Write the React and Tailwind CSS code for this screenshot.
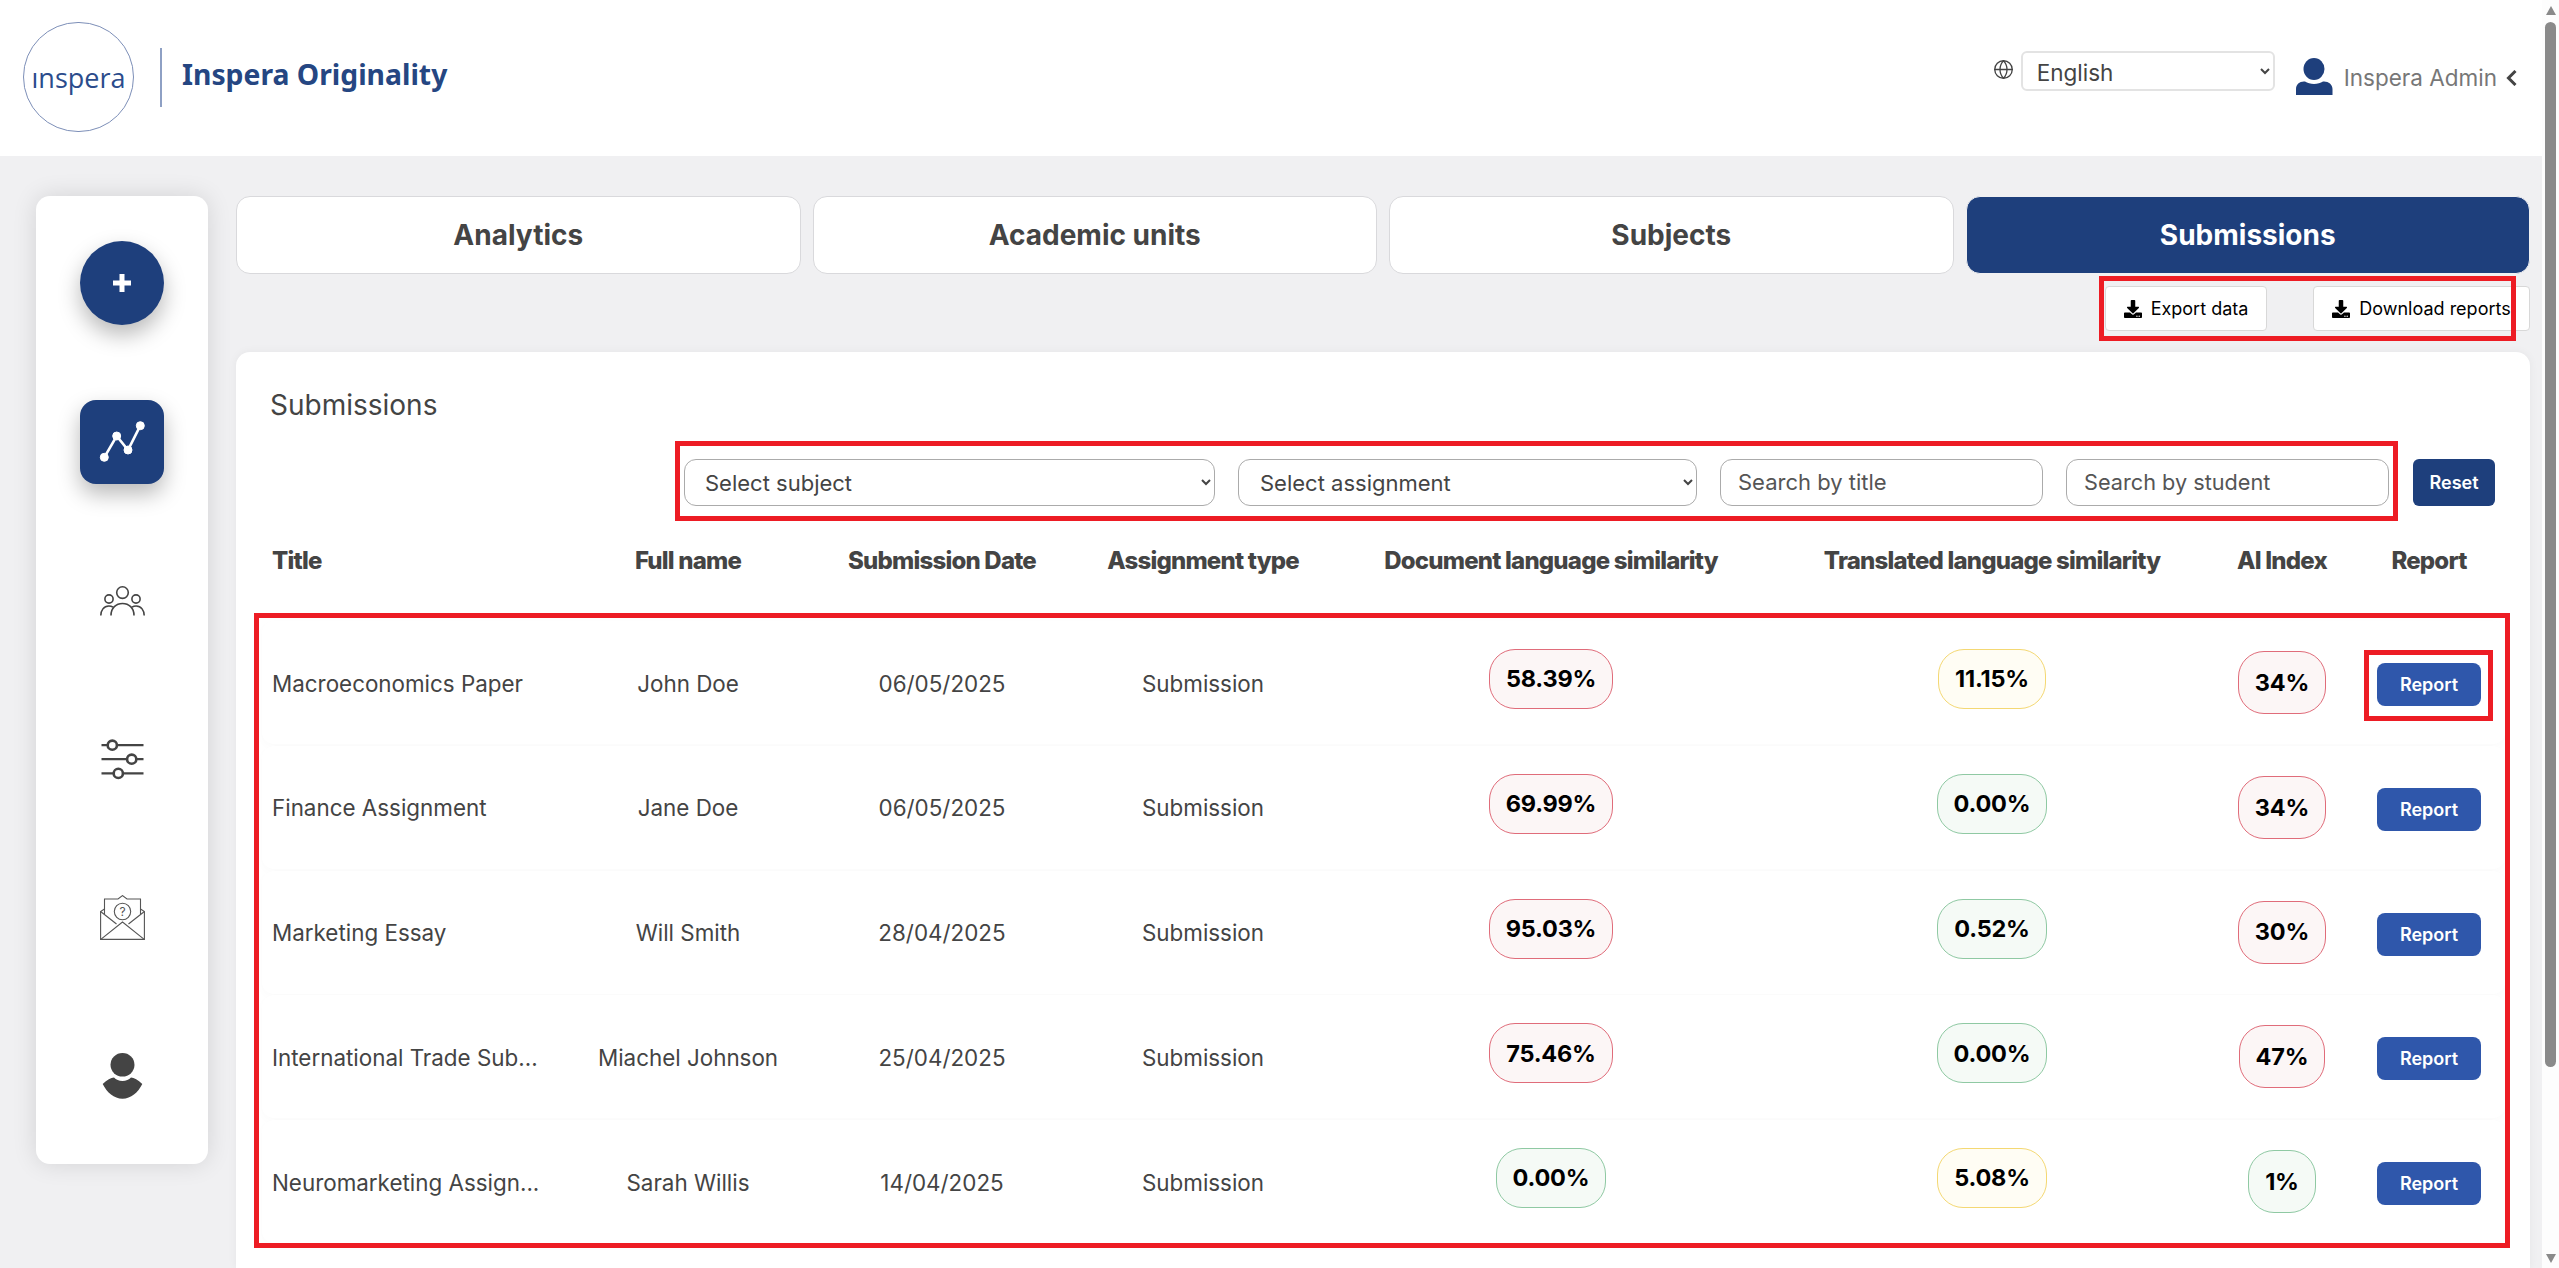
import React from "react";
import { Globe } from "lucide-react";
import { FaDownload } from "react-icons/fa";

const rows = [
  { title: "Macroeconomics Paper", name: "John Doe", date: "06/05/2025", doc: ["58.39%", "r"], tr: ["11.15%", "y"], ai: ["34%", "r"] },
  { title: "Finance Assignment", name: "Jane Doe", date: "06/05/2025", doc: ["69.99%", "r"], tr: ["0.00%", "g"], ai: ["34%", "r"] },
  { title: "Marketing Essay", name: "Will Smith", date: "28/04/2025", doc: ["95.03%", "r"], tr: ["0.52%", "g"], ai: ["30%", "r"] },
  { title: "International Trade Sub...", name: "Miachel Johnson", date: "25/04/2025", doc: ["75.46%", "r"], tr: ["0.00%", "g"], ai: ["47%", "r"] },
  { title: "Neuromarketing Assign...", name: "Sarah Willis", date: "14/04/2025", doc: ["0.00%", "g"], tr: ["5.08%", "y"], ai: ["1%", "g"] },
];

const tone = {
  r: "bg-[#fcf6f6] border-[#e06c7a]",
  y: "bg-[#fffdf4] border-[#f4d873]",
  g: "bg-[#f5faf6] border-[#8fc9a3]",
};

const cols = "grid grid-cols-[301px_250px_258px_264px_432px_450px_130px_158px] items-center";

function Pill({ value, t, tall }) {
  return (
    <span
      className={
        "inline-flex items-center justify-center border px-[16px] rounded-[26px] text-[23.5px] font-bold tracking-[-0.2px] text-black " +
        tone[t] +
        (tall ? " h-[63px]" : " h-[60px] mb-[7px]")
      }
    >
      {value}
    </span>
  );
}

function PeopleIcon() {
  return (
    <svg width="45" height="30" viewBox="0 0 45 30" fill="none" stroke="#444" strokeWidth="1.6">
      <circle cx="22.5" cy="6.6" r="5.8" />
      <circle cx="9" cy="13" r="4.1" />
      <circle cx="36" cy="13" r="4.1" />
      <path d="M11 29.5C11 22 16 17.5 22.5 17.5C29 17.5 34 22 34 29.5" />
      <path d="M0.8 29.5c0-5 3-9.5 8-9.5 1.5 0 3 .4 4.2 1.2" />
      <path d="M44.2 29.5c0-5-3-9.5-8-9.5-1.5 0-3 .4-4.2 1.2" />
    </svg>
  );
}

function SlidersIcon() {
  return (
    <svg width="43" height="41" viewBox="0 0 43 41" fill="none" stroke="#444">
      <path d="M0.5 6.2H42.5M0.5 20.2H42.5M0.5 34.4H42.5" strokeWidth="2.2" />
      <circle cx="11.3" cy="6.2" r="4.6" fill="#fff" strokeWidth="2.6" />
      <circle cx="30.7" cy="20.2" r="4.6" fill="#fff" strokeWidth="2.6" />
      <circle cx="17.3" cy="34.4" r="4.6" fill="#fff" strokeWidth="2.6" />
    </svg>
  );
}

function EnvelopeIcon() {
  return (
    <svg width="45" height="45" viewBox="0 0 45 45" fill="none" stroke="#555" strokeWidth="1.1">
      <path d="M4.5 14L0.6 16.5V44.4H44.4V16.5L40.5 14" />
      <path d="M4.5 19V4H18L22.5 0.6L27 4H40.5V19" />
      <path d="M0.6 16.5L16.5 29M44.4 16.5L28.5 29M0.8 44.4L22.5 27L44.2 44.4" />
      <circle cx="22.5" cy="16.5" r="8.2" />
      <text x="22.5" y="20.8" textAnchor="middle" fontSize="12" fill="#555" stroke="none" fontFamily="Inter, sans-serif">?</text>
    </svg>
  );
}

function UserGrey() {
  return (
    <svg width="41" height="46" viewBox="0 0 41 46" fill="#444">
      <ellipse cx="20.5" cy="11.8" rx="12" ry="11.8" />
      <path d="M0.7 31C5 27 9 24.8 12 24.6C14 26.8 17 28 20.5 28C24 28 27 26.8 29 24.6C32 24.8 36 27 40.3 31C36 39.5 29 45.7 20.5 45.7C12 45.7 5 39.5 0.7 31Z" />
    </svg>
  );
}

function UserBlue() {
  return (
    <svg width="37" height="37" viewBox="0 0 37 37" fill="#1e3f7c">
      <ellipse cx="18" cy="11" rx="10.5" ry="11" />
      <path d="M0 37V31C0 26 4 23 9 23.5C11.5 25 14.5 26 18 26C21.5 26 24.5 25 27 23.5C32 23 36.5 26 36.5 31V37Z" />
    </svg>
  );
}

function Red({ className }) {
  return <div className={"absolute border-[5px] border-[#ed1c24] pointer-events-none " + className} />;
}

export default function App() {
  return (
    <div className="relative flex w-[2559px] h-[1268px] overflow-hidden bg-[#fdfdfd] font-['Inter',sans-serif] text-[#444]">
      <div className="w-[2542px] flex flex-col shrink-0">
        {/* Header */}
        <header className="h-[156px] shrink-0 bg-white flex items-start">
          <div className="ml-[23px] mt-[22px] w-[111px] h-[110px] rounded-full border border-[#7d8fb8] flex items-center justify-center text-[27px] text-[#2b4c8c] leading-none font-['Open_Sans',sans-serif]">
            ınspera
          </div>
          <div className="ml-[26px] mt-[48px] w-[2px] h-[59px] bg-[#8ea0c4]" />
          <div className="ml-[20px] mt-[55px] text-[28.3px] leading-[38px] font-bold text-[#254682] font-['Noto_Sans',sans-serif]">
            Inspera Originality
          </div>
          <div className="ml-auto flex items-start">
            <Globe className="mt-[59px] w-[21px] h-[21px] text-[#444]" strokeWidth={1.5} />
            <select className="ml-[7px] mt-[51px] w-[254px] h-[40px] pl-[10px] pt-[2px] border-2 border-[#e3e3e3] rounded-[6px] text-[22.5px] text-[#444] bg-white">
              <option>English</option>
            </select>
            <div className="ml-[21px] mt-[58px]">
              <UserBlue />
            </div>
            <div className="ml-[11px] mt-[63px] text-[22.5px] leading-[30px] text-[#777]">Inspera Admin</div>
            <svg className="ml-[9px] mt-[70px]" width="11" height="16" viewBox="0 0 11 16" fill="none" stroke="#444" strokeWidth="3">
              <path d="M9.5 1L2.5 8L9.5 15" />
            </svg>
            <div className="w-[25px]" />
          </div>
        </header>

        {/* Body */}
        <div className="flex-1 flex bg-[#f0f0f2] pl-[36px] pr-[12px] pt-[40px] min-h-0">
          <aside className="w-[172px] h-[968px] shrink-0 bg-white rounded-[14px] shadow-[0_0_24px_rgba(0,0,0,0.12)] flex flex-col items-center pt-[45px]">
            <button className="w-[84px] h-[84px] shrink-0 rounded-full bg-[#1e3f7c] shadow-[0_10px_22px_rgba(0,0,0,0.28)] flex items-center justify-center">
              <svg width="20" height="20" viewBox="0 0 20 20" stroke="#fff" strokeWidth="5">
                <path d="M10 1V19M1 10H19" />
              </svg>
            </button>
            <button className="mt-[75px] w-[84px] h-[84px] shrink-0 rounded-[16px] bg-[#1e3f7c] shadow-[0_10px_22px_rgba(0,0,0,0.28)]">
              <svg width="84" height="84" viewBox="0 0 84 84" fill="#fff" stroke="#fff">
                <path d="M24.3 57.3L36.7 36L48 50L60.3 25.7" fill="none" strokeWidth="2.6" />
                <circle cx="24.3" cy="57.3" r="4" />
                <circle cx="36.7" cy="36" r="4" />
                <circle cx="48" cy="50" r="4" />
                <circle cx="60.3" cy="25.7" r="4" />
              </svg>
            </button>
            <div className="mt-[102px]"><PeopleIcon /></div>
            <div className="mt-[123px]"><SlidersIcon /></div>
            <div className="mt-[115px]"><EnvelopeIcon /></div>
            <div className="mt-[113px]"><UserGrey /></div>
          </aside>

          <main className="ml-[28px] flex-1 min-w-0 flex flex-col">
            <nav className="grid grid-cols-4 gap-[12px] h-[78px] shrink-0">
              {["Analytics", "Academic units", "Subjects"].map((t) => (
                <button key={t} className="bg-white border border-[#d9d9dc] rounded-[14px] text-[28px] font-bold text-[#444]">
                  {t}
                </button>
              ))}
              <button className="bg-[#1e3f7c] border border-[#f0f0f2] rounded-[14px] text-[28px] font-bold text-white">Submissions</button>
            </nav>

            <div className="mt-[12px] flex justify-end gap-[46px] shrink-0">
              <button className="w-[162px] h-[45px] bg-white border border-[#d8d8d8] rounded-[4px] flex items-center justify-center gap-[9px] text-[18px] text-black">
                <FaDownload className="w-[18px] h-[18px]" />
                Export data
              </button>
              <button className="w-[217px] h-[45px] bg-white border border-[#d8d8d8] rounded-[4px] flex items-center justify-center gap-[9px] text-[18px] text-black">
                <FaDownload className="w-[18px] h-[18px]" />
                Download reports
              </button>
            </div>

            <section className="mt-[21px] flex-1 bg-white rounded-t-[14px] shadow-[0_0_10px_rgba(0,0,0,0.05)]">
              <h2 className="ml-[34px] mt-[36px] text-[28px] leading-[34px] font-normal text-[#444]">Submissions</h2>

              <div className="mt-[37px] pr-[35px] flex justify-end gap-[23px]">
                <select className="w-[531px] h-[47px] pl-[16px] pr-[4px] border border-[#ababab] rounded-[12px] bg-white text-[22px] text-[#444]">
                  <option>Select subject</option>
                </select>
                <select className="w-[459px] h-[47px] pl-[17px] pr-[4px] border border-[#ababab] rounded-[12px] bg-white text-[22px] text-[#444]">
                  <option>Select assignment</option>
                </select>
                <input placeholder="Search by title" className="w-[323px] h-[47px] px-[17px] pb-[2px] border border-[#ababab] rounded-[12px] text-[22px] placeholder:text-[#555]" />
                <input placeholder="Search by student" className="w-[323px] h-[47px] px-[17px] pb-[2px] mr-[1px] border border-[#ababab] rounded-[12px] text-[21.7px] placeholder:text-[#555]" />
                <button className="w-[82px] h-[47px] bg-[#1e3f7c] rounded-[6px] text-white text-[18px] font-semibold">Reset</button>
              </div>

              <div className={"mt-[37px] ml-[26px] w-[2243px] h-[32px] text-[24px] font-extrabold tracking-[-0.8px] text-[#444] " + cols}>
                <div className="pl-[10px]">Title</div>
                <div className="text-center">Full name</div>
                <div className="text-center">Submission Date</div>
                <div className="text-center">Assignment type</div>
                <div className="text-center">Document language similarity</div>
                <div className="text-center">Translated language similarity</div>
                <div className="text-center">AI Index</div>
                <div className="text-center pl-[6px]">Report</div>
              </div>

              <div className="mt-[46px] ml-[26px] w-[2243px] flex flex-col gap-[1.75px]">
                {rows.map((r) => (
                  <div key={r.title} className={"h-[123px] bg-white rounded-[12px] shadow-[0_3px_10px_rgba(0,0,0,0.02)] text-[22.4px] text-[#444] " + cols}>
                    <div className="pl-[10px] mt-[2px] whitespace-nowrap">{r.title}</div>
                    <div className="text-center mt-[2px] whitespace-nowrap">{r.name}</div>
                    <div className="text-center mt-[2px]">{r.date}</div>
                    <div className="text-center mt-[2px]">Submission</div>
                    <div className="flex justify-center"><Pill value={r.doc[0]} t={r.doc[1]} /></div>
                    <div className="flex justify-center"><Pill value={r.tr[0]} t={r.tr[1]} /></div>
                    <div className="flex justify-center"><Pill value={r.ai[0]} t={r.ai[1]} tall /></div>
                    <div className="flex justify-center pl-[6px]">
                      <button className="mt-[4px] w-[104px] h-[43px] bg-[#2f57ab] rounded-[8px] text-white text-[18px] font-semibold">Report</button>
                    </div>
                  </div>
                ))}
              </div>
            </section>
          </main>
        </div>
      </div>

      {/* Scrollbar */}
      <div className="flex-1 flex flex-col items-center bg-[#fdfdfd]">
        <div className="mt-[6px] w-0 h-0 border-x-[5px] border-x-transparent border-b-[9px] border-b-[#8a8a8a]" />
        <div className="mt-[7px] w-[11px] h-[1045px] bg-[#8a8a8a] rounded-full" />
        <div className="mt-auto mb-[5px] w-0 h-0 border-x-[5px] border-x-transparent border-t-[9px] border-t-[#8a8a8a]" />
      </div>

      {/* Annotations */}
      <Red className="left-[2099px] top-[276px] w-[417px] h-[65px]" />
      <Red className="left-[675px] top-[441px] w-[1723px] h-[80px]" />
      <Red className="left-[254px] top-[613px] w-[2256px] h-[635px]" />
      <Red className="left-[2364px] top-[650px] w-[129px] h-[71px]" />
    </div>
  );
}
